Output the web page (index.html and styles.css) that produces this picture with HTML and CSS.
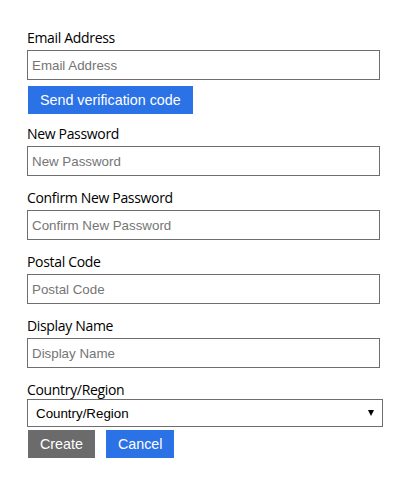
FILE: index.html
```html
<!DOCTYPE html>
<html lang="en">
<head>
<meta charset="utf-8">
<title>Sign up</title>
<link rel="stylesheet" href="styles.css">
</head>
<body>
<form class="form">
  <div class="field field-email">
    <label class="label" for="email">Email Address</label>
    <input class="input" id="email" type="text" placeholder="Email Address">
    <button class="btn btn-blue btn-verify" type="button">Send verification code</button>
  </div>
  <div class="field">
    <label class="label" for="pw">New Password</label>
    <input class="input" id="pw" type="password" placeholder="New Password">
  </div>
  <div class="field">
    <label class="label" for="pw2">Confirm New Password</label>
    <input class="input" id="pw2" type="password" placeholder="Confirm New Password">
  </div>
  <div class="field">
    <label class="label" for="postal">Postal Code</label>
    <input class="input" id="postal" type="text" placeholder="Postal Code">
  </div>
  <div class="field">
    <label class="label" for="name">Display Name</label>
    <input class="input" id="name" type="text" placeholder="Display Name">
  </div>
  <div class="field field-country">
    <label class="label label-tight" for="country">Country/Region</label>
    <div class="select-wrap">
      <select class="select" id="country">
        <option>Country/Region</option>
      </select>
    </div>
  </div>
  <div class="actions">
    <button class="btn btn-gray" type="button">Create</button>
    <button class="btn btn-blue" type="button">Cancel</button>
  </div>
</form>
</body>
</html>
```

FILE: styles.css
```css
html, body {
  margin: 0;
  padding: 0;
  background: #ffffff;
}

.form {
  padding: 28px 0 0 27px;
  display: flex;
  flex-direction: column;
}

.field {
  display: flex;
  flex-direction: column;
  align-items: flex-start;
  margin-bottom: 12px;
}

.field-email {
  margin-bottom: 10px;
}

.field-country {
  margin-bottom: 0;
}

.label {
  display: block;
  font-family: "Open Sans", "Noto Sans", sans-serif;
  font-size: 14px;
  letter-spacing: -0.33px;
  line-height: 20px;
  height: 20px;
  color: #000000;
  margin-bottom: 2px;
}

.label-tight {
  height: 19px;
  margin-bottom: 0;
}

.input {
  box-sizing: border-box;
  width: 353px;
  height: 30px;
  margin: 0;
  padding: 0 4px;
  border: 1px solid #6e6e6e;
  border-radius: 0;
  background: #ffffff;
  font-family: "Liberation Sans", Arial, sans-serif;
  font-size: 13.333px;
  color: #000000;
  outline: none;
}

.input::placeholder {
  color: #757575;
  opacity: 1;
}

.select-wrap {
  position: relative;
  width: 356px;
  height: 28px;
}

.select {
  box-sizing: border-box;
  width: 356px;
  height: 28px;
  margin: 0;
  padding: 0 0 0 8px;
  border: 1px solid #6e6e6e;
  border-radius: 0;
  background: #ffffff;
  -webkit-appearance: none;
  appearance: none;
  font-family: "Liberation Sans", Arial, sans-serif;
  font-size: 13.333px;
  color: #000000;
  outline: none;
}

.select-wrap::after {
  content: "";
  position: absolute;
  right: 9px;
  top: 11px;
  width: 0;
  height: 0;
  border-left: 3.5px solid transparent;
  border-right: 3.5px solid transparent;
  border-top: 6px solid #000000;
  pointer-events: none;
}

.btn {
  box-sizing: border-box;
  height: 28px;
  margin: 0 0 0 1px;
  padding: 0 12px;
  border: none;
  border-radius: 0;
  font-family: "Liberation Sans", Arial, sans-serif;
  font-size: 14.3px;
  line-height: 28px;
  color: #ffffff;
  cursor: pointer;
}

.btn-blue {
  background: #2b72e6;
}

.btn-gray {
  background: #6b6b6b;
}

.btn-verify {
  margin-top: 6px;
}

.actions {
  display: flex;
  gap: 10px;
  margin-top: 3px;
}
```
